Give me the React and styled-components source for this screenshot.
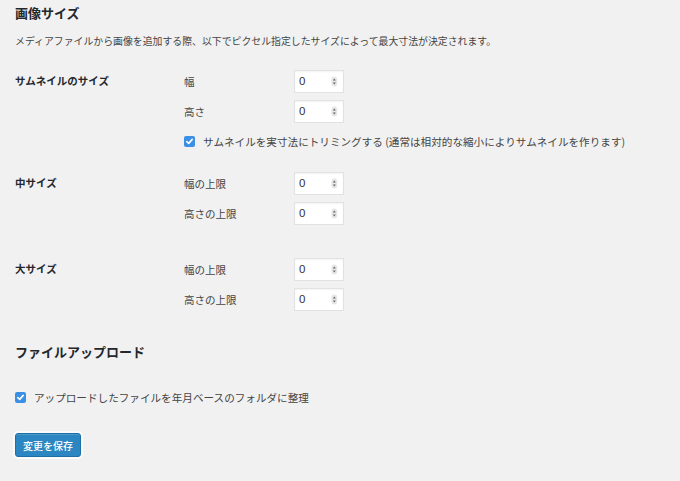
import React from 'react'
import styled, { createGlobalStyle } from 'styled-components'

const GlobalStyle = createGlobalStyle`
  html, body {
    margin: 0;
    padding: 0;
    background: #f1f1f1;
  }
  body {
    font-family: "Noto Sans CJK JP", "Noto Sans", sans-serif;
    color: #333;
  }
`

const Page = styled.div`
  padding: 3px 15px 20px;
`

const Title = styled.h2`
  margin: 0;
  font-size: 13px;
  line-height: 20px;
  font-weight: 700;
  color: #23282d;
  margin-top: ${(p) => p.$top || 0}px;
`

const Description = styled.p`
  margin: 10px 0 0;
  font-size: 9.9px;
  line-height: 16px;
  color: #444;
`

const Section = styled.div`
  display: flex;
  align-items: flex-start;
  margin-top: ${(p) => p.$top}px;
`

const SectionLabel = styled.div`
  width: 169px;
  flex-shrink: 0;
  font-size: 10.5px;
  font-weight: 700;
  line-height: 22px;
  color: #23282d;
`

const Fields = styled.div`
  display: flex;
  flex-direction: column;
  gap: 8px;
`

const FieldRow = styled.div`
  display: flex;
  align-items: center;
  height: 22px;
`

const FieldLabel = styled.label`
  width: 110px;
  font-size: 10.5px;
  color: #444;
`

const NumberBox = styled.div`
  box-sizing: border-box;
  width: 50px;
  height: 23px;
  display: flex;
  align-items: center;
  background: #fff;
  border: 1px solid #e2e2e2;
  box-shadow: inset 0 1px 2px rgba(0, 0, 0, 0.05);
  padding: 0 5px 0 4px;

  input {
    width: 100%;
    border: 0;
    outline: 0;
    padding: 0;
    background: transparent;
    font-family: "Liberation Sans", sans-serif;
    font-size: 11.5px;
    color: #333;
  }
`

const Check = styled.span`
  box-sizing: border-box;
  width: 11px;
  height: 11px;
  border-radius: 2px;
  background: #3b8fe5;
  display: inline-flex;
  align-items: center;
  justify-content: center;
  flex-shrink: 0;
`

const CheckRow = styled.label`
  display: flex;
  align-items: center;
  gap: 8px;
  height: 22px;
  font-size: 10.6px;
  color: #444;
  margin-top: ${(p) => p.$top || 0}px;
`

const SaveButton = styled.button`
  margin-top: 25px;
  width: 66px;
  height: 24px;
  padding: 0;
  border: 1px solid #1e6fa6;
  border-radius: 3px;
  background: #2c86c1;
  box-shadow: 0 0 0 2px #fafafa, inset 0 1px 0 rgba(255, 255, 255, 0.15);
  color: #fff;
  font-family: "Noto Sans CJK JP", sans-serif;
  font-size: 10px;
  font-weight: 500;
  cursor: pointer;
`

const Spinner = () => (
  <svg width="8" height="13" viewBox="0 0 8 13">
    <rect x="0.5" y="0.5" width="7" height="12" rx="3.5" fill="#e6e6e6" />
    <path d="M2.2 5.3 L4 3 L5.8 5.3 Z" fill="#666" />
    <path d="M2.2 7.7 L4 10 L5.8 7.7 Z" fill="#666" />
  </svg>
)

const Tick = () => (
  <svg width="9" height="9" viewBox="0 0 9 9">
    <path d="M1.8 4.6 L3.7 6.4 L7.2 2.4" fill="none" stroke="#fff" strokeWidth="1.6" strokeLinecap="round" strokeLinejoin="round" />
  </svg>
)

const NumberField = ({ label }) => (
  <FieldRow>
    <FieldLabel>{label}</FieldLabel>
    <NumberBox>
      <input type="text" defaultValue="0" />
      <Spinner />
    </NumberBox>
  </FieldRow>
)

const sizes = [
  { name: '中サイズ', top: 20 },
  { name: '大サイズ', top: 34 },
]

export default function App() {
  return (
    <>
      <GlobalStyle />
      <Page>
        <Title>画像サイズ</Title>
        <Description>
          メディアファイルから画像を追加する際、以下でピクセル指定したサイズによって最大寸法が決定されます。
        </Description>

        <Section $top={21}>
          <SectionLabel>サムネイルのサイズ</SectionLabel>
          <Fields>
            <NumberField label="幅" />
            <NumberField label="高さ" />
            <CheckRow>
              <Check>
                <Tick />
              </Check>
              サムネイルを実寸法にトリミングする (通常は相対的な縮小によりサムネイルを作ります)
            </CheckRow>
          </Fields>
        </Section>

        {sizes.map((s) => (
          <Section key={s.name} $top={s.top}>
            <SectionLabel>{s.name}</SectionLabel>
            <Fields>
              <NumberField label="幅の上限" />
              <NumberField label="高さの上限" />
            </Fields>
          </Section>
        ))}

        <Title $top={32}>ファイルアップロード</Title>
        <CheckRow $top={24}>
          <Check>
            <Tick />
          </Check>
          アップロードしたファイルを年月ベースのフォルダに整理
        </CheckRow>

        <SaveButton type="button">変更を保存</SaveButton>
      </Page>
    </>
  )
}
